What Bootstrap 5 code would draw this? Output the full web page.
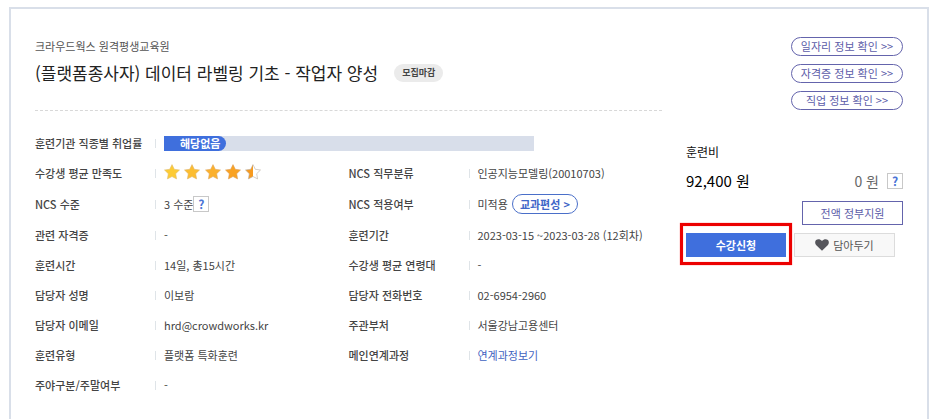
<!DOCTYPE html>
<html lang="ko">
<head>
<meta charset="utf-8">
<meta name="viewport" content="width=device-width, initial-scale=1">
<title>데이터 라벨링 기초 - 작업자 양성</title>
<link href="https://cdn.jsdelivr.net/npm/bootstrap@5.3.0/dist/css/bootstrap.min.css" rel="stylesheet">
<style>
  body { font-family: "Noto Sans CJK KR", sans-serif; font-size: 11px; line-height: 18px; color: #4d4d4d; background: #fff; }
  .course-panel { margin: 7px 11px 0 9px; border: 2px solid #d9dfe9; padding: 28px 24px 16px; min-height: calc(100vh - 7px); gap: 24px; }
  .course-main { min-width: 0; }
  .course-side { width: 217px; }
  .course-org { color: #555; }
  .course-head { border-bottom: 1px dashed #d8d8d8; padding-bottom: 23px; margin-bottom: 17px; }
  .course-title { font-size: 17px; line-height: 28px; font-weight: 400; color: #222; }
  .closed-tag { background: #ebebeb; color: #444; font-size: 9px; line-height: 18px; padding: 0 8px; }
  .info-row { min-height: 30px; }
  .info-row dt { width: 121px; font-weight: 500; color: #444; }
  .info-row dt::after { content: ""; width: 1px; height: 9px; background: #dfe4e8; }
  .info-row dd { padding-left: 8px; color: #444; }
  .info-tall { min-height: 32px; }
  .rate-track { height: 15px; max-width: 370px; background: #d8deea; border-radius: 0; font-size: 11px; }
  .rate-fill { background: #3f6fdd; border-radius: 0 8px 8px 0; padding: 0 6px 0 16px; font-weight: 700; }
  .btn { --bs-btn-font-size: 11px; --bs-btn-line-height: 16px; --bs-btn-padding-y: 0; --bs-btn-padding-x: 0; }
  .link-pill { --bs-btn-color: #5c5ca8; --bs-btn-border-color: #6464ac; --bs-btn-line-height: 17px; --bs-btn-border-radius: 10px; width: 112px; }
  .plan-pill { --bs-btn-color: #3f66c8; --bs-btn-border-color: #4a6fc9; --bs-btn-line-height: 18px; --bs-btn-border-radius: 10px; --bs-btn-padding-x: 7px; --bs-btn-font-weight: 700; }
  .help-btn { --bs-btn-color: #4b74d6; --bs-btn-border-color: #c8c8c8; --bs-btn-font-size: 12px; --bs-btn-line-height: 14px; --bs-btn-border-radius: 0; --bs-btn-font-weight: 700; width: 16px; }
  .more-link { color: #3f62bf; }
  .fee-label { font-size: 12px; color: #111; margin-top: 33px; }
  .fee-line { line-height: 24px; margin-top: 8px; margin-bottom: 8px; }
  .fee-total { font-size: 15px; color: #000; }
  .fee-self { font-size: 14px; color: #666; }
  .box-btn { --bs-btn-line-height: 22px; --bs-btn-border-radius: 0; width: 101px; }
  .support-btn { --bs-btn-color: #5c5ca8; --bs-btn-border-color: #6464ac; }
  .apply-btn { --bs-btn-color: #fff; --bs-btn-bg: #3f6fdd; --bs-btn-border-color: #3f6fdd; --bs-btn-font-weight: 700; width: 100px; }
  .keep-btn { --bs-btn-color: #555; --bs-btn-bg: #f8f8f8; --bs-btn-border-color: #dcdcdc; }
  .focus-frame { top: -10px; right: -6px; bottom: -8px; left: -6px; border: 3px solid #ec0000; box-shadow: 0 0 1px #ff5a5a, inset 0 0 1px #ff5a5a; pointer-events: none; }
</style>
</head>
<body>
<main class="course-panel d-flex border-bottom-0">
  <section class="course-main flex-fill">
    <header class="course-head">
      <div class="course-org mb-1">크라우드웍스 원격평생교육원</div>
      <div class="d-flex align-items-center gap-3">
        <h1 class="course-title mb-0 text-nowrap">(플랫폼종사자) 데이터 라벨링 기초 - 작업자 양성</h1>
        <span class="closed-tag rounded-pill fw-bold text-nowrap">모집마감</span>
      </div>
    </header>

    <dl class="row g-0 mb-0">
      <div class="info-row col-12 d-flex align-items-center"><dt class="d-flex align-items-center justify-content-between flex-shrink-0">훈련기관 직종별 취업률</dt><dd class="mb-0 flex-fill"><div class="progress rate-track"><div class="progress-bar rate-fill">해당없음</div></div></dd></div>

      <div class="info-row col-6 d-flex align-items-center"><dt class="d-flex align-items-center justify-content-between flex-shrink-0">수강생 평균 만족도</dt><dd class="mb-0">
        <svg class="d-block" width="98" height="20" viewBox="0 0 98 20" role="img" aria-label="4.5">
          <defs>
            <path id="star" d="M8 .6l2.300 4.700 5.200.7-3.800 3.700.9 5.200L8 12.500 3.400 14.900l.9-5.200L.5 6l5.200-.7z"/>
            <linearGradient id="half"><stop offset=".5" stop-color="#f79a1e"/><stop offset=".5" stop-color="#fff"/></linearGradient>
          </defs>
          <g stroke-width=".6" stroke-linejoin="round">
            <use href="#star" x="0" y="1" fill="#fdcb35" stroke="#e0c072"/>
            <use href="#star" x="20" y="1" fill="#fcbd31" stroke="#dfb56c"/>
            <use href="#star" x="41" y="1" fill="#fbb02c" stroke="#dfab66"/>
            <use href="#star" x="61" y="1" fill="#f9a222" stroke="#dc9f5c"/>
            <use href="#star" x="81" y="1" fill="url(#half)" stroke="#b9aca0"/>
          </g>
        </svg></dd></div>
      <div class="info-row col-6 d-flex align-items-center"><dt class="d-flex align-items-center justify-content-between flex-shrink-0">NCS 직무분류</dt><dd class="mb-0">인공지능모델링(20010703)</dd></div>

      <div class="info-row info-tall col-6 d-flex align-items-center"><dt class="d-flex align-items-center justify-content-between flex-shrink-0">NCS 수준</dt><dd class="mb-0 d-flex align-items-center">3 수준<button type="button" class="btn help-btn" aria-label="NCS 수준 도움말">?</button></dd></div>
      <div class="info-row info-tall col-6 d-flex align-items-center"><dt class="d-flex align-items-center justify-content-between flex-shrink-0">NCS 적용여부</dt><dd class="mb-0 d-flex align-items-center gap-1">미적용<button type="button" class="btn plan-pill">교과편성 &gt;</button></dd></div>

      <div class="info-row col-6 d-flex align-items-center"><dt class="d-flex align-items-center justify-content-between flex-shrink-0">관련 자격증</dt><dd class="mb-0">-</dd></div>
      <div class="info-row col-6 d-flex align-items-center"><dt class="d-flex align-items-center justify-content-between flex-shrink-0">훈련기간</dt><dd class="mb-0 text-nowrap">2023-03-15 ~2023-03-28 (12회차)</dd></div>

      <div class="info-row col-6 d-flex align-items-center"><dt class="d-flex align-items-center justify-content-between flex-shrink-0">훈련시간</dt><dd class="mb-0">14일, 총15시간</dd></div>
      <div class="info-row col-6 d-flex align-items-center"><dt class="d-flex align-items-center justify-content-between flex-shrink-0">수강생 평균 연령대</dt><dd class="mb-0">-</dd></div>

      <div class="info-row col-6 d-flex align-items-center"><dt class="d-flex align-items-center justify-content-between flex-shrink-0">담당자 성명</dt><dd class="mb-0">이보람</dd></div>
      <div class="info-row col-6 d-flex align-items-center"><dt class="d-flex align-items-center justify-content-between flex-shrink-0">담당자 전화번호</dt><dd class="mb-0">02-6954-2960</dd></div>

      <div class="info-row col-6 d-flex align-items-center"><dt class="d-flex align-items-center justify-content-between flex-shrink-0">담당자 이메일</dt><dd class="mb-0">hrd@crowdworks.kr</dd></div>
      <div class="info-row col-6 d-flex align-items-center"><dt class="d-flex align-items-center justify-content-between flex-shrink-0">주관부처</dt><dd class="mb-0">서울강남고용센터</dd></div>

      <div class="info-row col-6 d-flex align-items-center"><dt class="d-flex align-items-center justify-content-between flex-shrink-0">훈련유형</dt><dd class="mb-0">플랫폼 특화훈련</dd></div>
      <div class="info-row col-6 d-flex align-items-center"><dt class="d-flex align-items-center justify-content-between flex-shrink-0">메인연계과정</dt><dd class="mb-0"><a class="more-link text-decoration-none" href="#">연계과정보기</a></dd></div>

      <div class="info-row col-6 d-flex align-items-center"><dt class="d-flex align-items-center justify-content-between flex-shrink-0">주야구분/주말여부</dt><dd class="mb-0">-</dd></div>
    </dl>
  </section>

  <aside class="course-side flex-shrink-0">
    <div class="d-flex flex-column align-items-end gap-2">
      <button type="button" class="btn link-pill">일자리 정보 확인 &gt;&gt;</button>
      <button type="button" class="btn link-pill">자격증 정보 확인 &gt;&gt;</button>
      <button type="button" class="btn link-pill">직업 정보 확인 &gt;&gt;</button>
    </div>
    <div class="fee-label">훈련비</div>
    <div class="fee-line d-flex align-items-center justify-content-between">
      <span class="fee-total">92,400 원</span>
      <span class="d-flex align-items-center gap-2"><span class="fee-self">0 원</span><button type="button" class="btn help-btn" aria-label="훈련비 도움말">?</button></span>
    </div>
    <div class="d-flex justify-content-end mb-2"><button type="button" class="btn box-btn support-btn">전액 정부지원</button></div>
    <div class="d-flex gap-2">
      <div class="position-relative"><button type="button" class="btn box-btn apply-btn d-block">수강신청</button><span class="focus-frame position-absolute"></span></div>
      <button type="button" class="btn box-btn keep-btn d-flex align-items-center justify-content-center gap-1">
        <svg width="14" height="12" viewBox="0 0 14 12" aria-hidden="true"><path d="M7 11.700 1.300 6.200C-.2 4.700-.2 2.400 1.100 1.100 2.700-.3 5.300-.1 7 2.100 8.700-.1 11.300-.3 12.900 1.100c1.300 1.300 1.300 3.600-.2 5.100z" fill="#55555b"/></svg>담아두기</button>
    </div>
  </aside>
</main>
<script src="https://cdn.jsdelivr.net/npm/bootstrap@5.3.0/dist/js/bootstrap.bundle.min.js"></script>
</body>
</html>
